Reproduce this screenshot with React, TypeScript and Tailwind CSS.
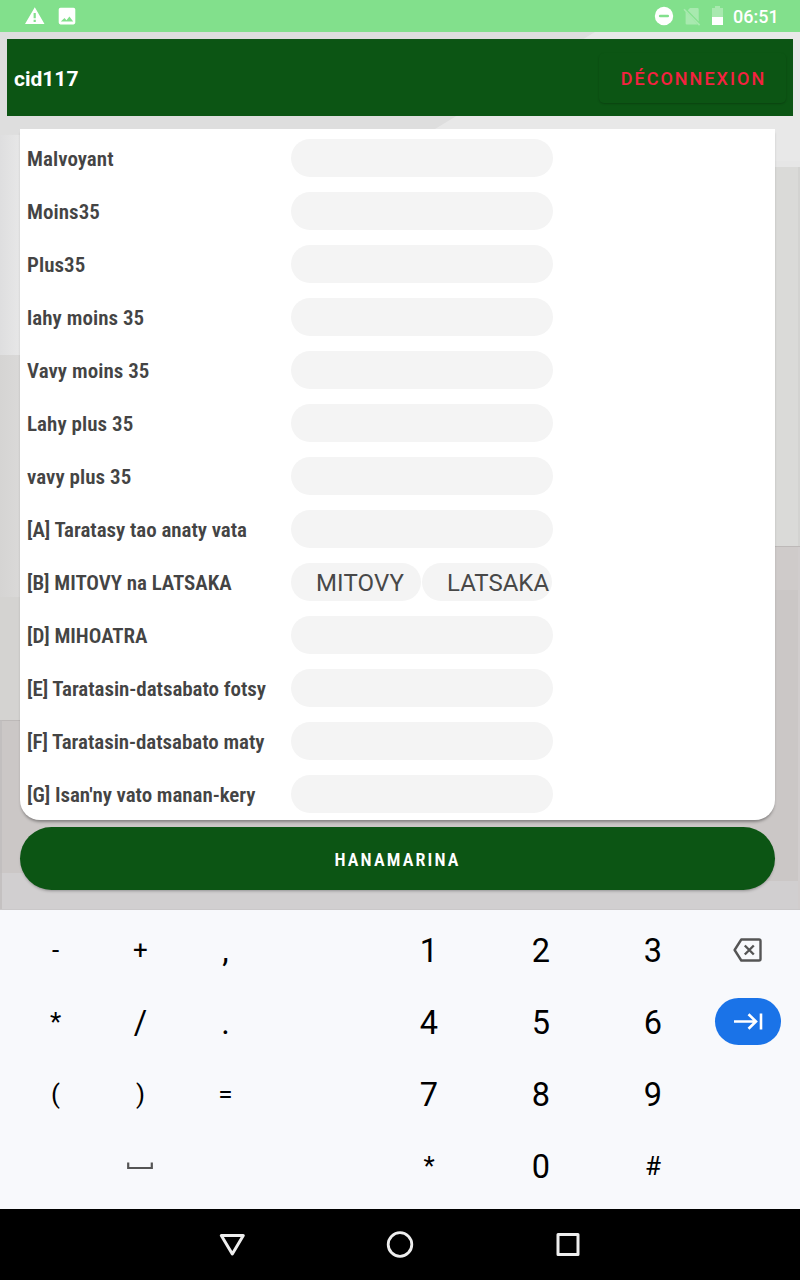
import React from "react";

const fields = [
  "Malvoyant",
  "Moins35",
  "Plus35",
  "lahy moins 35",
  "Vavy moins 35",
  "Lahy plus 35",
  "vavy plus 35",
  "[A] Taratasy tao anaty vata",
  "[B] MITOVY na LATSAKA",
  "[D] MIHOATRA",
  "[E] Taratasin-datsabato fotsy",
  "[F] Taratasin-datsabato maty",
  "[G] Isan'ny vato manan-kery",
];

const small = "text-[26px] leading-[72px]";
const large = "text-[32.5px] leading-[75px]";

const symbols: [string, string][] = [
  ["-", small], ["+", small], [",", large],
  ["*", small], ["/", large], [".", large],
  ["(", small], [")", small], ["=", small],
];

const digits: [string, string][] = [
  ["1", large], ["2", large], ["3", large],
  ["4", large], ["5", large], ["6", large],
  ["7", large], ["8", large], ["9", large],
  ["*", small], ["0", large], ["#", small],
];

function StatusBar() {
  return (
    <header className="flex h-8 items-center bg-[#82e08c] pl-[23px] pr-[22px] text-white">
      <svg width="24" height="24" viewBox="0 0 24 24" fill="currentColor">
        <path d="M2 20h19.5L11.8 3.2zM10.6 9h2.2v5.2h-2.2zM10.6 15.8h2.2v2.2h-2.2z" fillRule="evenodd" />
      </svg>
      <svg width="20" height="20" viewBox="0 0 20 20" className="ml-[10px]" fill="currentColor">
        <path fillRule="evenodd" d="M3.500 1.800h13a1.800 1.800 0 0 1 1.800 1.800v13a1.800 1.800 0 0 1-1.800 1.800h-13a1.800 1.800 0 0 1-1.800-1.800v-13a1.800 1.800 0 0 1 1.800-1.800zM3.800 15.600h12.400l-3.800-5-2.900 3.600-2-2.300z" />
      </svg>
      <div className="flex-1" />
      <svg width="20" height="20" viewBox="0 0 20 20" className="mr-[9px]">
        <circle cx="10" cy="10" r="9.2" fill="#fff" />
        <path d="M6.200 10h7.600" stroke="#82e08c" strokeWidth="2.6" strokeLinecap="round" />
      </svg>
      <svg width="18" height="20" viewBox="0 0 18 20" className="mr-[10px]">
        <path d="M7 2h7.500a1.200 1.200 0 0 1 1.200 1.200v12.400L4.800 4.200zM2.600 5.600l12.200 12.900H3.800a1.200 1.200 0 0 1-1.200-1.200z" fill="#a8e9af" />
        <path d="M1 3.200l15.600 15.900" stroke="#a8e9af" strokeWidth="1.600" />
      </svg>
      <svg width="12" height="20" viewBox="0 0 12 20" className="mr-[10px]">
        <path d="M4 0h5v2h3v9H1V2h3z" fill="#a8e9af" />
        <path d="M1 11h11v8H1z" fill="#fff" />
      </svg>
      <span className="w-[45px] whitespace-nowrap pt-px text-[18px] font-medium leading-8">06:51</span>
    </header>
  );
}

function Backdrop() {
  return (
    <svg className="absolute inset-0" width="800" height="878" viewBox="0 32 800 878" preserveAspectRatio="none">
      <defs>
        <linearGradient id="edge" x1="0" x2="1">
          <stop offset="0" stopColor="#dededf" />
          <stop offset="1" stopColor="#e9e9e9" />
        </linearGradient>
        <linearGradient id="mid" x1="0" x2="1">
          <stop offset="0" stopColor="#d5d4d3" />
          <stop offset="1" stopColor="#dbdad9" />
        </linearGradient>
      </defs>
      <path d="M0 32h800v878H0z" fill="#e8e8e8" />
      <path d="M0 32h595L430 132l-430 3z" fill="#dedede" />
      <path d="M0 135h24v220H0z" fill="url(#edge)" />
      <path d="M0 355h24v242H0z" fill="url(#mid)" />
      <path d="M0 597h24v123H0z" fill="#d4d3d1" />
      <path d="M770 161h30v385h-30z" fill="#dadad8" />
      <path d="M770 161h30v6h-30z" fill="#e6e6e6" />
      <path d="M770 546h30v44h-30z" fill="#cfcbca" />
      <path d="M0 720h400v160H0zM400 590h400v291H400z" fill="#cbc7c6" />
      <path d="M0 873h400v37H0zM400 881h400v29H400z" fill="#d1cfd0" />
      <path d="M775 546.5h25M0 720.5h20" stroke="#bdb9b8" />
      <path d="M1 720v190" stroke="#bfbcbc" strokeWidth="1.5" />
      <path d="M799 167v379" stroke="#d3d3d1" strokeWidth="2" />
      <path d="M799 547v363" stroke="#d1cdcd" strokeWidth="2" />
      <path d="M0 909.5h800" stroke="#cac8c9" />
    </svg>
  );
}

function Field({ label }: { label: string }) {
  const bracketed = label.startsWith("[");
  return (
    <div className="flex h-[53px] items-center">
      <div
        className={`w-[264px] whitespace-nowrap pt-[3px] font-['Roboto_Condensed','Roboto',sans-serif] text-[21px] font-[580] leading-[38px] text-[#444] [font-stretch:75%] ${
          bracketed ? "tracking-[-0.05px]" : "tracking-[0.05px]"
        }`}
      >
        {label}
      </div>
      {label.startsWith("[B]") ? (
        <div className="flex gap-px text-[24px] leading-[38px] text-[#484848]">
          <div className="h-[38px] w-[130px] overflow-hidden rounded-full bg-[#f4f4f4] pl-[25px] pt-px tracking-[0.15px]">MITOVY</div>
          <div className="h-[38px] w-[130px] whitespace-nowrap rounded-full bg-[#f4f4f4] pl-[25px] pt-px">LATSAKA</div>
        </div>
      ) : (
        <div className="h-[38px] w-[262px] rounded-full bg-[#f4f4f4]" />
      )}
    </div>
  );
}

function Keyboard() {
  return (
    <section className="flex h-[299px] bg-[#f8f9fc] pl-[13px] pt-1 text-black">
      <div className="grid h-72 w-[255px] grid-cols-3 grid-rows-[repeat(4,72px)] text-center">
        {symbols.map(([key, size]) => (
          <div key={key} className={size}>{key}</div>
        ))}
        <div />
        <div className="flex items-center justify-center pr-px">
          <svg width="28" height="12" viewBox="0 0 28 12">
            <path d="M2.200 2.500v5.500h23.600V2.500" fill="none" stroke="#555" strokeWidth="2.200" />
          </svg>
        </div>
      </div>
      <div className="ml-[105px] grid h-72 w-[336px] grid-cols-3 grid-rows-[repeat(4,72px)] text-center">
        {digits.map(([key, size]) => (
          <div key={key} className={size}>{key}</div>
        ))}
      </div>
      <div className="-ml-px flex w-20 flex-col items-center">
        <div className="flex h-[72px] items-center">
          <svg width="32" height="26" viewBox="0 0 32 26" fill="none" stroke="#555" strokeWidth="2.400">
            <path d="M9.300 2.500H27a1.500 1.500 0 0 1 1.500 1.500v18a1.500 1.500 0 0 1-1.500 1.500H9.300L2.600 13z" strokeLinejoin="round" />
            <path d="M12.800 8.500l9 9m0-9l-9 9" />
          </svg>
        </div>
        <div className="mt-3 flex h-[47px] w-[66px] items-center justify-center rounded-full bg-[#1a73e8]">
          <svg width="30" height="20" viewBox="0 0 30 20" fill="none" stroke="#fff" strokeWidth="2.600">
            <path d="M1 9.500h22M15.500 2.200l7.500 7.300-7.500 7.300M28 1.500v16" />
          </svg>
        </div>
      </div>
    </section>
  );
}

function NavBar() {
  return (
    <nav className="flex h-[71px] items-center justify-center gap-[138px] bg-black">
      <svg width="30" height="30" viewBox="0 0 30 30" fill="none" stroke="#eee" strokeWidth="3" strokeLinejoin="round">
        <path d="M4.300 5.500h22L15.300 24z" />
      </svg>
      <svg width="30" height="30" viewBox="0 0 30 30" fill="none" stroke="#eee" strokeWidth="2.800">
        <circle cx="15" cy="14.500" r="11.800" />
      </svg>
      <svg width="30" height="30" viewBox="0 0 30 30" fill="none" stroke="#eee" strokeWidth="3" strokeLinejoin="round">
        <path d="M5 4.500h20v20H5z" />
      </svg>
    </nav>
  );
}

export default function App() {
  return (
    <div className="flex h-[1280px] w-[800px] flex-col overflow-hidden font-['Roboto',sans-serif]">
      <StatusBar />
      <main className="relative h-[878px]">
        <Backdrop />
        <div className="relative flex h-full flex-col pt-[7px]">
          <div className="mx-[7px] flex h-[77px] items-center justify-between bg-[#0c5514] pl-[7px] pr-[7px]">
            <h1 className="pt-[2px] text-[21px] font-bold leading-6 text-white">cid117</h1>
            <button className="flex h-[50px] w-[187px] items-center justify-center rounded-[5px] pl-[2px] pt-[2px] text-[18px] font-medium tracking-[2px] text-[#f42240] shadow-[0_1px_2px_rgba(0,0,0,0.22)]">
              DÉCONNEXION
            </button>
          </div>
          <div className="ml-5 mt-[13px] h-[691px] w-[755px] overflow-hidden rounded-b-[20px] bg-white pl-[7px] pt-[2px] shadow-[0_3px_3px_-1px_rgba(0,0,0,0.35)]">
            {fields.map((label) => (
              <Field key={label} label={label} />
            ))}
          </div>
          <button className="ml-5 mt-[7px] h-[63px] w-[755px] rounded-full bg-[#0c5514] pt-px font-['Roboto_Condensed','Roboto',sans-serif] text-[18px] font-semibold tracking-[2.15px] text-white shadow-[0_2px_3px_-1px_rgba(0,0,0,0.3)] [font-stretch:75%]">
            HANAMARINA
          </button>
        </div>
      </main>
      <Keyboard />
      <NavBar />
    </div>
  );
}
